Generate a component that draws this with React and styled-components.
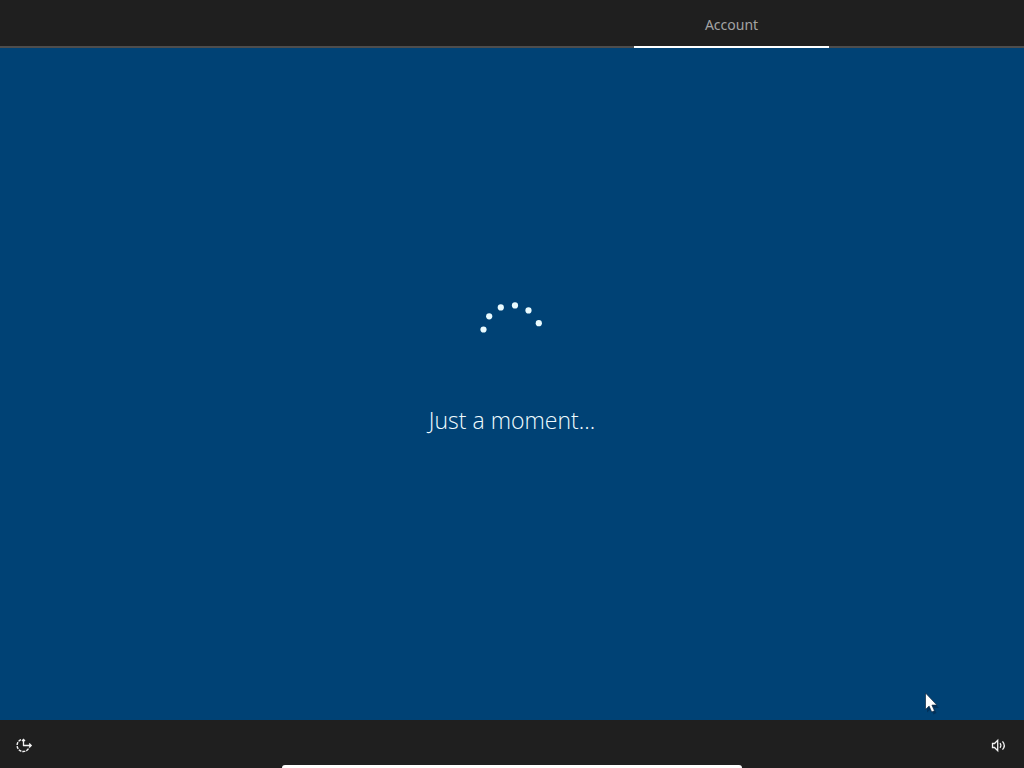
import React from "react";
import styled, { createGlobalStyle } from "styled-components";

const GlobalStyle = createGlobalStyle`
  * { box-sizing: border-box; }
  body {
    margin: 0;
    background: #004275;
    font-family: "Open Sans", "Noto Sans", sans-serif;
  }
`;

const Screen = styled.div`
  display: flex;
  flex-direction: column;
  min-height: 100vh;
  overflow: hidden;
`;

const StepBar = styled.nav`
  display: grid;
  grid-template-columns: 634fr 195fr 195fr;
  height: 48px;
  background: #1f1f1f;
  box-shadow: inset 0 -2px #4d4d4d;
`;

const Step = styled.a`
  grid-column: 2;
  display: flex;
  align-items: center;
  justify-content: center;
  border-bottom: 2px solid #ffffff;
  padding-top: 4px;
  color: #a3a3a3;
  font-family: "Noto Sans", sans-serif;
  font-size: 14px;
  line-height: 20px;
  text-decoration: none;
`;

const Stage = styled.main`
  position: relative;
  flex: 1;
  display: flex;
  flex-direction: column;
  align-items: center;
  justify-content: center;
  gap: 38px;
  padding-bottom: 30px;
  background: #004275;
`;

const Spinner = styled.svg`
  width: 64px;
  height: 64px;
  fill: #e9fbff;
`;

const Message = styled.p`
  margin: 0;
  color: #f0fcff;
  font-size: 23px;
  font-weight: 300;
  line-height: 32px;
`;

const Pointer = styled.svg`
  position: absolute;
  right: 84px;
  bottom: 4px;
  width: 16px;
  height: 24px;
`;

const Footer = styled.footer`
  display: flex;
  flex-direction: column;
  height: 48px;
  background: #1f1f1f;
`;

const Tools = styled.div`
  flex: 1;
  display: flex;
  align-items: center;
  justify-content: space-between;
  padding: 6px 16px 0 14px;
`;

const IconButton = styled.button`
  display: flex;
  border: 0;
  padding: 0;
  background: none;
  color: #f2f2f2;
`;

const Icon = styled.svg`
  width: ${(p) => p.$width}px;
  height: 18px;
  fill: none;
  stroke: currentColor;
`;

const Handle = styled.div`
  width: 45%;
  height: 3px;
  margin: 0 auto;
  border-radius: 6px 6px 0 0;
  background: #ffffff;
`;

const dots = [
  [3.5, 27.5],
  [9.2, 14.3],
  [20.8, 5.4],
  [35, 3.4],
  [48.5, 8.4],
  [58.8, 21.2],
];

export default function App() {
  return (
    <>
      <GlobalStyle />
      <Screen>
        <StepBar aria-label="Setup steps">
          <Step href="#account" aria-current="step">Account</Step>
        </StepBar>
        <Stage>
          <Spinner viewBox="0 0 64 64" aria-hidden="true">
            {dots.map(([x, y]) => (
              <circle key={x} cx={x} cy={y} r="3.1" />
            ))}
          </Spinner>
          <Message role="status">Just a moment...</Message>
          <Pointer viewBox="0 0 16 24" aria-hidden="true">
            <path d="M3 3.5v17l4-3.5 2.5 5.5 3-1.5-2.5-5h5z" fill="#001f3d" opacity=".45" />
            <path
              d="M1.5 1v16.5l3.6-3.4 2.6 5.900 2.800-1.200-2.600-5.700h5z"
              fill="#fff"
              stroke="#102840"
              strokeWidth=".7"
            />
          </Pointer>
        </Stage>
        <Footer>
          <Tools>
            <IconButton aria-label="Ease of Access">
              <Icon $width={20} viewBox="0 0 20 18" aria-hidden="true">
                <path d="M7 2.6A6.2 6.2 0 1 0 15 10.8" strokeWidth="1.4" strokeDasharray="3 1" />
                <path d="M9.5 2v7M8 4l1.5-1.5L11 4" strokeWidth="1.3" />
                <path d="M9 8.5h8M15.2 6.5l2 2-2 2" strokeWidth="1.3" />
              </Icon>
            </IconButton>
            <IconButton aria-label="Volume">
              <Icon $width={18} viewBox="0 0 18 18" aria-hidden="true">
                <path d="M2.5 6.5v4h2l3.2 3.2V3.3L4.5 6.5z" strokeWidth="1.3" />
                <path d="M10 6.2q1.8 2.3 0 4.6" strokeWidth="1.2" />
                <path d="M12.5 4.3q3.6 4.2 0 8.4" strokeWidth="1.3" />
              </Icon>
            </IconButton>
          </Tools>
          <Handle />
        </Footer>
      </Screen>
    </>
  );
}
